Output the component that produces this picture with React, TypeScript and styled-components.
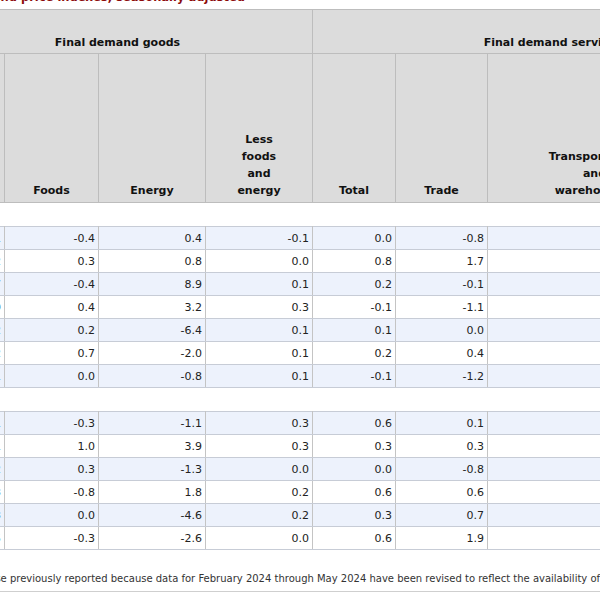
import React from "react";
import styled, { createGlobalStyle } from "styled-components";

const Global = createGlobalStyle`
  html, body { margin: 0; padding: 0; background: #fff; }
  body { overflow: hidden; }
`;

const Page = styled.div`
  width: 600px;
  height: 600px;
  overflow: hidden;
  background: #fff;
  font-family: "DejaVu Sans", Verdana, sans-serif;
  color: #1f1f1f;
`;

const Title = styled.div`
  display: flex;
  justify-content: flex-end;
  width: 245px;
  height: 20px;
  margin-top: -11px;
  line-height: 16px;
  font-size: 11.5px;
  font-weight: bold;
  color: #8c0a0a;
  white-space: nowrap;
`;

const Table = styled.table`
  border-collapse: collapse;
  table-layout: fixed;
  width: 854px;
  margin-left: -78px;
  font-size: 11px;
`;

const GroupHead = styled.th`
  height: 39px;
  background: #dcdcdc;
  border: 1px solid #bdbdbd;
  vertical-align: bottom;
  text-align: center;
  font-weight: bold;
  padding: 0 4px 4px;
  color: #111;
`;

const ColHead = styled.th`
  height: 145px;
  background: #dcdcdc;
  border: 1px solid #bdbdbd;
  vertical-align: bottom;
  text-align: center;
  font-weight: bold;
  line-height: 17px;
  padding: 0 4px 3px;
  color: #111;
`;

const Row = styled.tr<{ $shade: boolean }>`
  background: ${(p) => (p.$shade ? "#edf2fc" : "#ffffff")};
`;

const Cell = styled.td`
  height: 22px;
  padding: 0 3px 0 4px;
  text-align: right;
  border-left: 1px solid #c4c4c4;
  border-right: 1px solid #c4c4c4;
  border-top: 1px solid #c7ccd6;
  border-bottom: 1px solid #c7ccd6;
  color: #222;
  white-space: nowrap;
`;

const SpacerCell = styled.td`
  height: 23px;
  padding: 0;
  border: none;
  background: #fff;
`;

const Footnote = styled.div`
  height: 41px;
  box-sizing: border-box;
  padding-top: 21px;
  line-height: 16px;
  font-size: 10px;
  color: #333;
  white-space: nowrap;
  margin-left: -21px;
  width: 900px;
`;

const Rule = styled.div`
  width: 600px;
  height: 1px;
  background: #cfcfcf;
`;

type R = string[];

const group1: R[] = [
  ["-0.1", "-0.4", "0.4", "-0.1", "0.0", "-0.8", "0.5", "0.2"],
  ["0.2", "0.3", "0.8", "0.0", "0.8", "1.7", "0.3", "0.5"],
  ["1.7", "-0.4", "8.9", "0.1", "0.2", "-0.1", "0.6", "0.4"],
  ["0.9", "0.4", "3.2", "0.3", "-0.1", "-1.1", "0.4", "0.3"],
  ["-1.2", "0.2", "-6.4", "0.1", "0.1", "0.0", "-0.2", "0.2"],
  ["-0.2", "0.7", "-2.0", "0.1", "0.2", "0.4", "0.1", "0.1"],
  ["-0.1", "0.0", "-0.8", "0.1", "-0.1", "-1.2", "0.2", "0.3"],
];

const group2: R[] = [
  ["-0.1", "-0.3", "-1.1", "0.3", "0.6", "0.1", "0.8", "0.9"],
  ["1.1", "1.0", "3.9", "0.3", "0.3", "0.3", "0.1", "0.4"],
  ["-0.2", "0.3", "-1.3", "0.0", "0.0", "-0.8", "0.4", "0.3"],
  ["0.3", "-0.8", "1.8", "0.2", "0.6", "0.6", "0.2", "0.7"],
  ["-0.3", "0.0", "-4.6", "0.2", "0.3", "0.7", "0.5", "0.1"],
  ["-0.5", "-0.3", "-2.6", "0.0", "0.6", "1.9", "0.3", "0.2"],
];

const widths = [82, 94, 107, 107, 83, 92, 214, 92];

const Spacer = () => (
  <tr>
    {widths.map((_, i) => (
      <SpacerCell key={i} />
    ))}
  </tr>
);

const Rows = ({ data }: { data: R[] }) => (
  <>
    {data.map((r, i) => (
      <Row key={i} $shade={i % 2 === 0}>
        {r.map((v, j) => (
          <Cell key={j}>{v}</Cell>
        ))}
      </Row>
    ))}
  </>
);

export default function App() {
  return (
    <Page>
      <Global />
      <Title>
        <span>Table A. Monthly percent changes in selected final demand price indexes, seasonally adjusted</span>
      </Title>
      <Table>
        <colgroup>
          {widths.map((w, i) => (
            <col key={i} style={{ width: w }} />
          ))}
        </colgroup>
        <thead>
          <tr>
            <GroupHead colSpan={4}>Final demand goods</GroupHead>
            <GroupHead colSpan={4}>Final demand services</GroupHead>
          </tr>
          <tr>
            <ColHead>Total</ColHead>
            <ColHead>Foods</ColHead>
            <ColHead>Energy</ColHead>
            <ColHead>
              Less
              <br />
              foods
              <br />
              and
              <br />
              energy
            </ColHead>
            <ColHead>Total</ColHead>
            <ColHead>Trade</ColHead>
            <ColHead>
              Transportation
              <br />
              and
              <br />
              warehousing
            </ColHead>
            <ColHead>Other</ColHead>
          </tr>
        </thead>
        <tbody>
          <Spacer />
          <Rows data={group1} />
          <Spacer />
          <Rows data={group2} />
        </tbody>
      </Table>
      <Footnote>
        those previously reported because data for February 2024 through May 2024 have been revised to reflect the availability of late reports and corrections by respondents.
      </Footnote>
      <Rule />
    </Page>
  );
}
